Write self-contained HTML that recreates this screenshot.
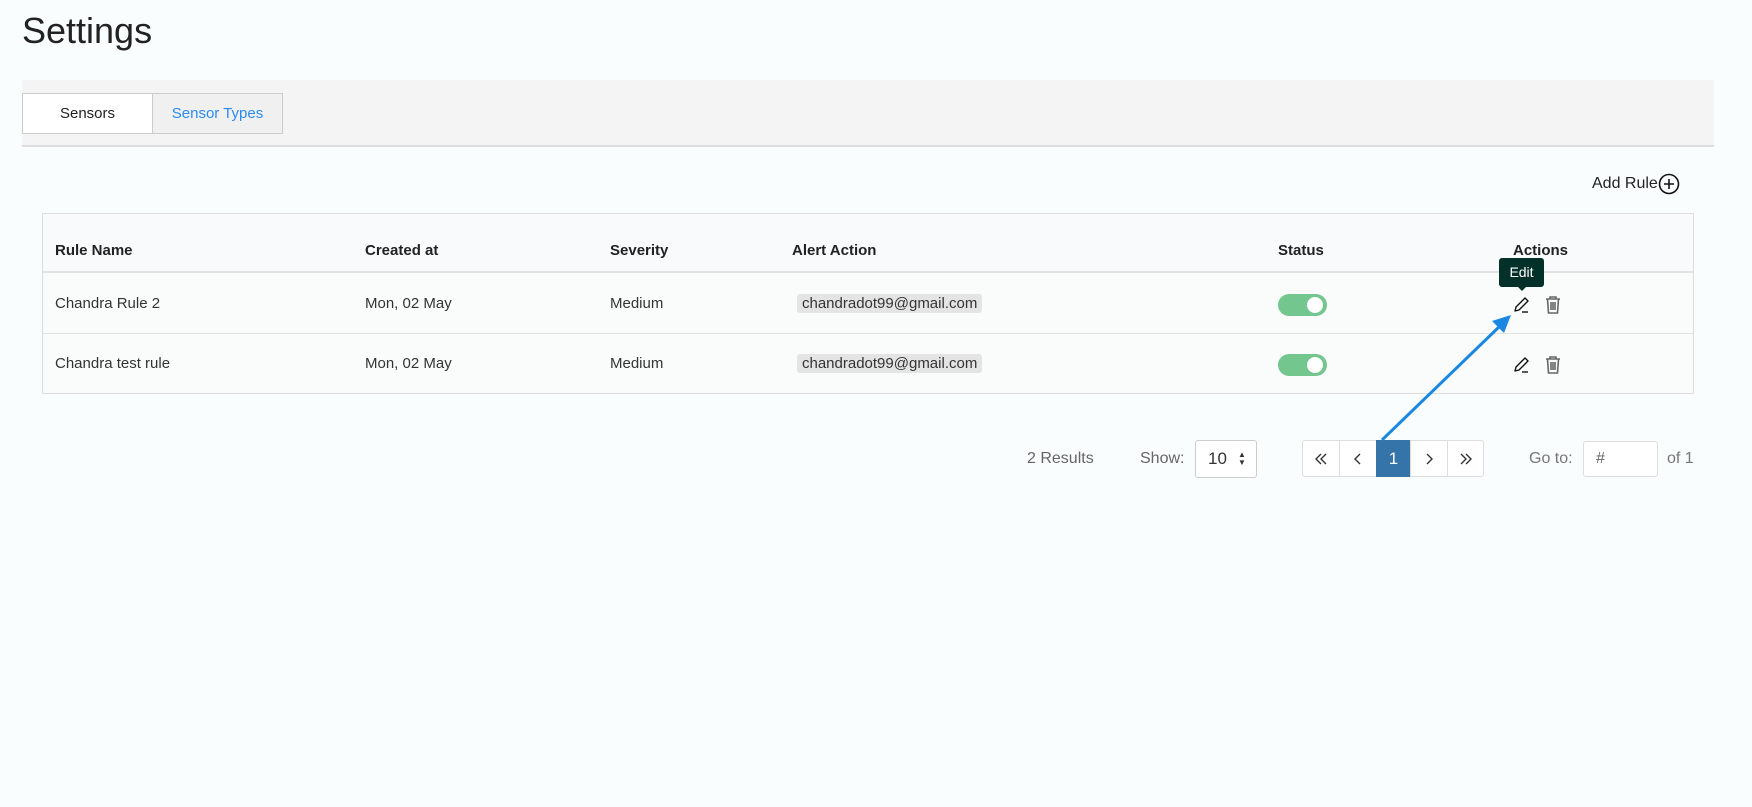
<!DOCTYPE html>
<html><head><style>
*{box-sizing:border-box;margin:0;padding:0}
body{width:1752px;height:807px;background:#f9fdfe;font-family:"Liberation Sans",sans-serif;color:#222;position:relative;overflow:hidden;font-size:15px}
.a{position:absolute;white-space:nowrap}
.th{font-weight:bold;font-size:15px;color:#222}
.td{font-size:15px;color:#333}
.chip{background:#e4e4e4;border-radius:3px;padding:1px 5px;font-size:15px;color:#333}
.tog{width:49px;height:22px;background:#72c68e;border-radius:11px}
.tog::after{content:"";position:absolute;right:4px;top:3px;width:16px;height:16px;border-radius:50%;background:#fff}
.pg{position:absolute;top:440px;height:37px;border:1px solid #ddd;background:#fff;display:flex;align-items:center;justify-content:center;color:#333;font-size:17px}
</style></head><body>
<div class="a" style="left:22px;top:10px;font-size:36px;color:#222">Settings</div>
<div class="a" style="left:22px;top:80px;width:1692px;height:67px;background:#f4f4f4;border-bottom:2px solid #ddd"></div>
<div class="a" style="left:22px;top:93px;width:131px;height:41px;background:#fff;border:1px solid #ccc;text-align:center;line-height:39px;font-size:15px;color:#222">Sensors</div>
<div class="a" style="left:152px;top:93px;width:131px;height:41px;background:#f0f0f0;border:1px solid #ccc;text-align:center;line-height:39px;font-size:15px;color:#2a8cf0">Sensor Types</div>

<div class="a" style="left:1592px;top:175px;font-size:16px;color:#222">Add Rule</div>
<svg class="a" style="left:1658px;top:173px" width="22" height="22" viewBox="0 0 22 22"><circle cx="11" cy="11" r="9.5" fill="none" stroke="#111" stroke-width="1.6"/><path d="M11 6v10M6 11h10" stroke="#111" stroke-width="1.6"/></svg>

<div class="a" style="left:42px;top:213px;width:1652px;height:181px;border:1px solid #ddd;background:#fafcfc"></div>
<div class="a" style="left:43px;top:214px;width:1650px;height:59px;background:#f8fafb;border-bottom:2px solid #e2e2e2"></div>
<div class="a" style="left:43px;top:333px;width:1650px;height:1px;background:#e2e2e2"></div>

<div class="a th" style="left:55px;top:242px">Rule Name</div>
<div class="a th" style="left:365px;top:242px">Created at</div>
<div class="a th" style="left:610px;top:242px">Severity</div>
<div class="a th" style="left:792px;top:242px">Alert Action</div>
<div class="a th" style="left:1278px;top:242px">Status</div>
<div class="a th" style="left:1513px;top:242px">Actions</div>

<div class="a td" style="left:55px;top:295px">Chandra Rule 2</div>
<div class="a td" style="left:365px;top:295px">Mon, 02 May</div>
<div class="a td" style="left:610px;top:295px">Medium</div>
<div class="a chip" style="left:797px;top:294px">chandradot99@gmail.com</div>
<div class="a tog" style="left:1278px;top:294px"></div>

<div class="a td" style="left:55px;top:355px">Chandra test rule</div>
<div class="a td" style="left:365px;top:355px">Mon, 02 May</div>
<div class="a td" style="left:610px;top:355px">Medium</div>
<div class="a chip" style="left:797px;top:354px">chandradot99@gmail.com</div>
<div class="a tog" style="left:1278px;top:354px"></div>

<svg class="a" style="left:1513px;top:296px" width="18" height="18" viewBox="0 0 18 18"><path d="M2 15l1-4L12 2l3 3-9 9z" fill="none" stroke="#111" stroke-width="1.4" stroke-linejoin="round"/><path d="M9 16h6" stroke="#111" stroke-width="1.4"/></svg>
<svg class="a" style="left:1513px;top:356px" width="18" height="18" viewBox="0 0 18 18"><path d="M2 15l1-4L12 2l3 3-9 9z" fill="none" stroke="#111" stroke-width="1.4" stroke-linejoin="round"/><path d="M9 16h6" stroke="#111" stroke-width="1.4"/></svg>
<svg class="a" style="left:1544px;top:295px" width="18" height="19" viewBox="0 0 18 19"><path d="M2 4h14M6 4V2h6v2M3.5 4l1 14h9l1-14M7 7v8M9 7v8M11 7v8" fill="none" stroke="#666" stroke-width="1.6"/></svg>
<svg class="a" style="left:1544px;top:355px" width="18" height="19" viewBox="0 0 18 19"><path d="M2 4h14M6 4V2h6v2M3.5 4l1 14h9l1-14M7 7v8M9 7v8M11 7v8" fill="none" stroke="#666" stroke-width="1.6"/></svg>

<div class="a" style="left:1499px;top:258px;width:45px;height:29px;background:#04302a;border-radius:3px;color:#fff;font-size:14px;text-align:center;line-height:29px">Edit</div>
<div class="a" style="left:1517px;top:286px;width:0;height:0;border-left:5px solid transparent;border-right:5px solid transparent;border-top:5px solid #04302a"></div>

<div class="a" style="left:1027px;top:450px;font-size:16px;color:#666">2 Results</div>
<div class="a" style="left:1140px;top:450px;font-size:16px;color:#666">Show:</div>
<div class="a" style="left:1195px;top:440px;width:62px;height:38px;border:1px solid #ccc;border-radius:3px;background:#fff;font-size:17px;color:#333;padding:8px 0 0 12px">10<span style="position:absolute;left:42px;top:10px;font-size:8px;line-height:8px">▲<br>▼</span></div>

<div class="pg" style="left:1302px;width:38px;border-radius:3px 0 0 3px"><svg width="14" height="12" viewBox="0 0 14 12"><path d="M7 1L2 6l5 5M12 1L7 6l5 5" fill="none" stroke="#333" stroke-width="1.4"/></svg></div>
<div class="pg" style="left:1339px;width:38px"><svg width="8" height="12" viewBox="0 0 8 12"><path d="M6 1L1 6l5 5" fill="none" stroke="#333" stroke-width="1.4"/></svg></div>
<div class="pg" style="left:1376px;width:35px;background:#3574a9;border-color:#3574a9;color:#fff">1</div>
<div class="pg" style="left:1410px;width:38px"><svg width="8" height="12" viewBox="0 0 8 12"><path d="M2 1l5 5-5 5" fill="none" stroke="#333" stroke-width="1.4"/></svg></div>
<div class="pg" style="left:1447px;width:37px;border-radius:0 3px 3px 0"><svg width="14" height="12" viewBox="0 0 14 12"><path d="M2 1l5 5-5 5M7 1l5 5-5 5" fill="none" stroke="#333" stroke-width="1.4"/></svg></div>

<div class="a" style="left:1529px;top:450px;font-size:16px;color:#777">Go to:</div>
<div class="a" style="left:1583px;top:441px;width:75px;height:36px;border:1px solid #ddd;border-radius:3px;background:#fff;font-size:16px;color:#666;padding:8px 0 0 12px">#</div>
<div class="a" style="left:1667px;top:450px;font-size:16px;color:#777">of 1</div>

<svg class="a" style="left:0;top:0" width="1752" height="807"><line x1="1382" y1="440" x2="1500" y2="326" stroke="#1a88e0" stroke-width="3"/><path d="M1511 315l-19 6 12 12z" fill="#1a88e0"/></svg>
</body></html>
